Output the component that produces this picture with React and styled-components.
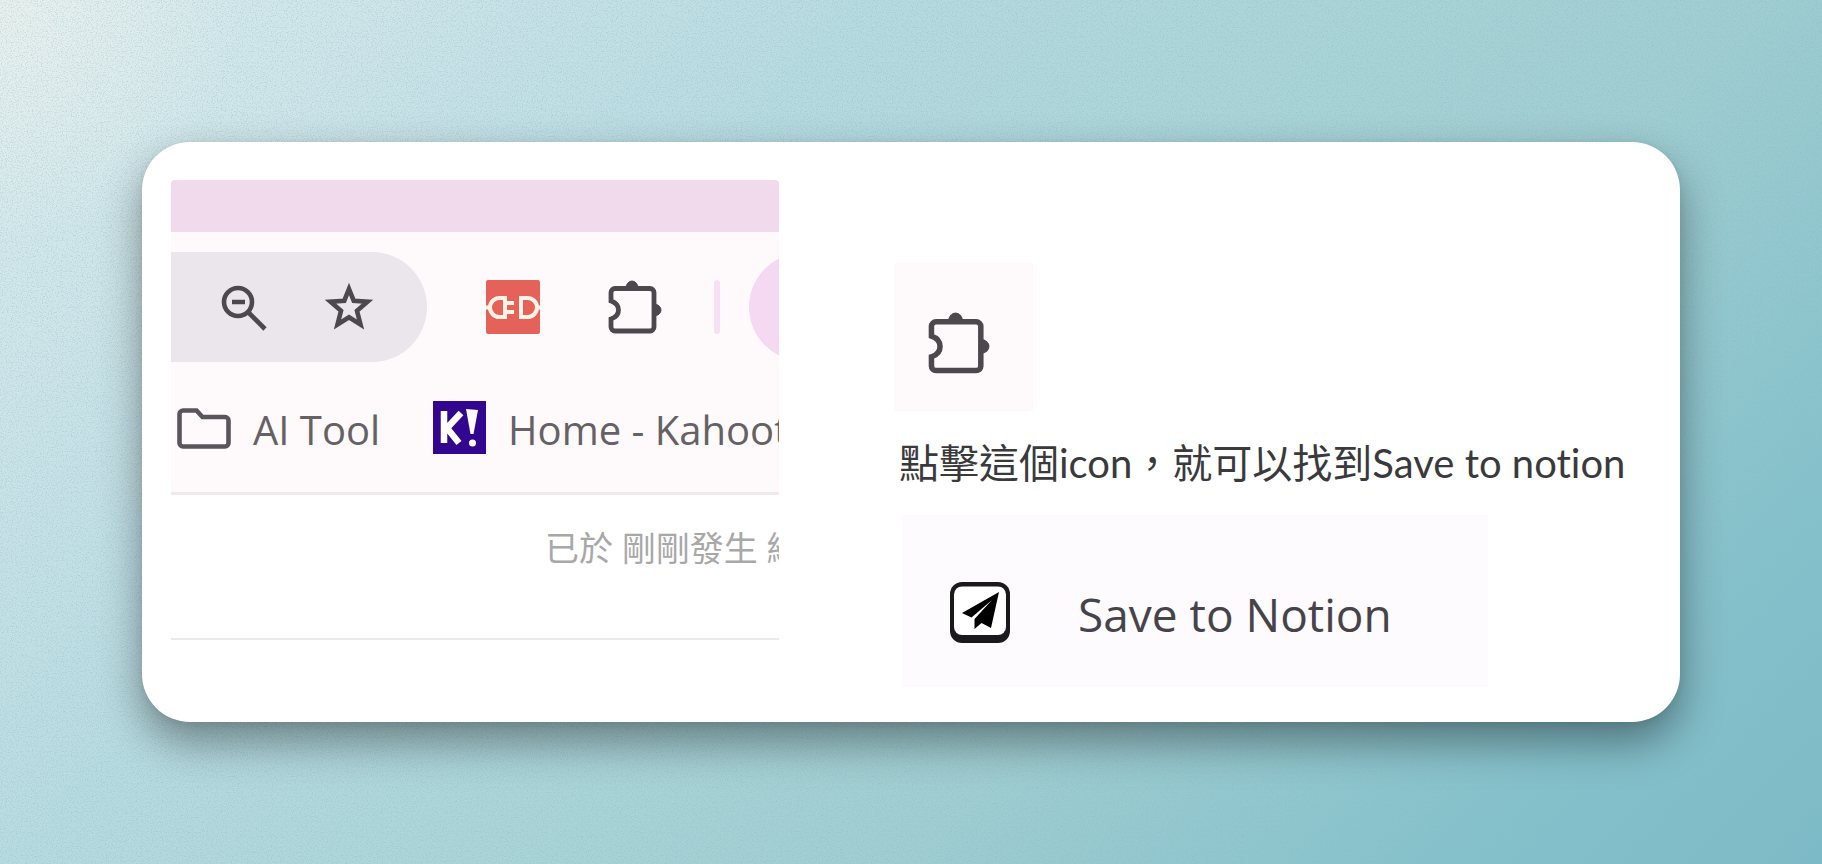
import React, { useId } from "react";
import styled, { createGlobalStyle } from "styled-components";

const GlobalStyle = createGlobalStyle`
  * {
    box-sizing: border-box;
  }
  body {
    margin: 0;
    font-family: "Open Sans", "Noto Sans CJK TC", sans-serif;
  }
`;

const Page = styled.main`
  position: relative;
  display: flex;
  min-height: 100vh;
  padding: 142px;
  background:
    radial-gradient(circle at 0 0, rgba(240, 242, 238, 0.7), rgba(240, 242, 238, 0) 12%),
    linear-gradient(135deg, #dbecee 0%, #cfe5e9 14%, #b8dbe1 32%, #aad4d8 50%, #9fcdd1 66%, #85c1cb 86%, #7cbac7 100%);
`;

const Grain = styled.svg`
  position: absolute;
  inset: 0;
  width: 100%;
  height: 100%;
  opacity: 0.3;
`;

const Card = styled.section`
  position: relative;
  flex: 1;
  display: flex;
  gap: 115px;
  padding: 38px 29px 32px;
  background: #fff;
  border-radius: 48px;
  box-shadow: 0 20px 44px rgba(0, 0, 0, 0.4), 0 2px 8px rgba(0, 0, 0, 0.06);
`;

const Browser = styled.div`
  flex: 0 1 608px;
  min-width: 0;
  overflow: hidden;
`;

const TabStrip = styled.div`
  height: 52px;
  background: #f0daec;
  border-radius: 4px 4px 0 0;
`;

const Chrome = styled.div`
  height: 263px;
  padding-top: 20px;
  background: #fefafc;
  border-bottom: 3px solid #f3e6ec;
`;

const Toolbar = styled.div`
  display: flex;
  align-items: center;
  height: 110px;
`;

const AddressEnd = styled.div`
  display: flex;
  align-items: center;
  flex: none;
  gap: 56px;
  width: 256px;
  height: 110px;
  padding-left: 49px;
  background: #ebe5ec;
  border-radius: 0 55px 55px 0;
`;

const IconButton = styled.button`
  display: flex;
  flex: none;
  margin: 0;
  padding: 0;
  border: 0;
  background: none;
  cursor: pointer;
`;

const Extensions = styled.div`
  display: flex;
  flex: none;
  align-items: center;
  gap: 68px;
  padding: 0 52px 0 59px;
`;

const Divider = styled.span`
  flex: none;
  width: 6px;
  height: 54px;
  border-radius: 3px;
  background: #f6e1f4;
`;

const Avatar = styled.button`
  flex: none;
  width: 108px;
  height: 108px;
  margin-left: 29px;
  padding: 0;
  border: 0;
  border-radius: 50%;
  background: #f5d8f1;
`;

const Bookmarks = styled.nav`
  display: flex;
  align-items: center;
  gap: 53px;
  height: 131px;
  padding-left: 6px;
`;

const Bookmark = styled.a`
  display: flex;
  flex: none;
  align-items: center;
  gap: 22px;
  font-size: 40px;
  line-height: 56px;
  color: #656165;
  text-decoration: none;
  white-space: nowrap;
`;

const Label = styled.span`
  padding-top: 4px;
`;

const Status = styled.p`
  margin: 0;
  height: 145px;
  padding: 28px 0 0 374px;
  border-bottom: 2px solid #ebebeb;
  font-size: 34px;
  line-height: 50px;
  color: #a8a8a8;
  white-space: nowrap;
  overflow: hidden;
`;

const Guide = styled.div`
  flex: 1;
  min-width: 0;
  padding-top: 83px;
`;

const Tile = styled.div`
  display: flex;
  align-items: center;
  justify-content: center;
  width: 139px;
  height: 148px;
  padding: 12px 10px 0 0;
  background: #fefafc;
`;

const Caption = styled.p`
  margin: 22px 0;
  padding-left: 5px;
  font-family: "Lato", "Noto Sans CJK TC", sans-serif;
  font-size: 40px;
  line-height: 60px;
  font-weight: 400;
  font-variant-ligatures: none;
  color: #3a3a3c;
  white-space: nowrap;
`;

const SaveItem = styled.button`
  display: flex;
  align-items: center;
  gap: 68px;
  width: 586px;
  height: 172px;
  margin: 0 0 0 8px;
  padding: 22px 0 0 48px;
  border: 0;
  background: #fdfbfe;
  font-family: inherit;
  font-size: 46px;
  line-height: 60px;
  color: #464449;
  text-align: left;
`;

const GrainLayer = () => {
  const id = useId();
  return (
    <Grain aria-hidden="true">
      <filter id={id} x="0" y="0" width="100%" height="100%">
        <feTurbulence type="fractalNoise" baseFrequency="0.8" numOctaves="3" />
        <feColorMatrix values="0 0 0 0 0.25  0 0 0 0 0.48  0 0 0 0 0.56  4 0 0 0 -1.9" />
      </filter>
      <rect width="100%" height="100%" filter={`url(#${id})`} />
    </Grain>
  );
};

const ZoomOutIcon = () => (
  <svg width="48" height="48" viewBox="0 0 48 48" fill="none" stroke="#4d484e" strokeWidth="4.6">
    <circle cx="18" cy="19" r="14" />
    <path d="M12 19h13M28 29l17 17" />
  </svg>
);

const StarIcon = () => (
  <svg width="50" height="50" viewBox="0 0 50 50" fill="none" stroke="#4d484e" strokeWidth="4.6">
    <path d="M25 7l4.700 11.700 13.800 1L33 28.700l3.500 13.800L25 35.200 13.500 42.500 17 28.700 6.500 19.700l13.800-1z" />
  </svg>
);

const PlugIcon = () => (
  <svg width="54" height="54" viewBox="0 0 54 54" fill="none" stroke="#fff3e6" strokeWidth="4">
    <rect width="54" height="54" rx="2" fill="#e4625a" stroke="none" />
    <path d="M19 18h-5.500a9.500 9.500 0 0 0 0 19H19z" />
    <path d="M0 27.500h4M19 23h9M19 32h9M50 27.500h4" />
    <path d="M35 18h6.500a9.500 9.500 0 0 1 0 19H35z" />
  </svg>
);

const PuzzleIcon = ({ size }) => (
  <svg width={size} height={size} viewBox="0 0 54 54" fill="none">
    <path
      d="M7 8.500h35a4 4 0 0 1 4 4V47a4 4 0 0 1-4 4H7a4 4 0 0 1-4-4v-8q7.500-2.500 7.500-9T3 21v-8.500a4 4 0 0 1 4-4z"
      stroke="#4d484e"
      strokeWidth="4.800"
    />
    <path d="M18 8a6 7 0 0 1 12 0zM46 24a7 6 0 0 1 0 12z" fill="#4d484e" stroke="#4d484e" />
  </svg>
);

const FolderIcon = () => (
  <svg width="54" height="42" viewBox="0 0 54 42" fill="none">
    <path
      d="M6 3.500h13.500l6 6.500H48a3.500 3.500 0 0 1 3.500 3.500v22.500A3.500 3.500 0 0 1 48 39.500H6A3.500 3.500 0 0 1 2.500 36V7A3.500 3.500 0 0 1 6 3.500z"
      stroke="#5a555a"
      strokeWidth="4.600"
    />
  </svg>
);

const KahootIcon = () => (
  <svg width="53" height="53" viewBox="0 0 53 53">
    <rect width="53" height="53" fill="#32068f" />
    <path d="M11 10v32M28 12L14 27l12 15" fill="none" stroke="#fff" strokeWidth="6.500" />
    <path d="M33 8l12 1-4.500 24h-3z" fill="#fff" />
    <circle cx="39.500" cy="42" r="3.500" fill="#fff" />
  </svg>
);

const SendIcon = () => (
  <svg width="60" height="61" viewBox="0 0 60 61">
    <rect width="60" height="61" rx="12" fill="#1a1a1d" />
    <rect x="4" y="4.500" width="52" height="48.500" rx="8" fill="#fff" />
    <path d="M49 10L12 31l9.500 4.500L42 18 24.500 37v10l7-6 9.500 5z" fill="#000" />
  </svg>
);

const App = () => {
  return (
    <>
      <GlobalStyle />
      <Page lang="zh-Hant">
        <GrainLayer />
        <Card>
          <Browser>
            <TabStrip />
            <Chrome>
              <Toolbar>
                <AddressEnd>
                  <IconButton aria-label="Zoom out">
                    <ZoomOutIcon />
                  </IconButton>
                  <IconButton aria-label="Bookmark">
                    <StarIcon />
                  </IconButton>
                </AddressEnd>
                <Extensions>
                  <IconButton aria-label="Plug">
                    <PlugIcon />
                  </IconButton>
                  <IconButton aria-label="Extensions">
                    <PuzzleIcon size={54} />
                  </IconButton>
                </Extensions>
                <Divider />
                <Avatar aria-label="Profile" />
              </Toolbar>
              <Bookmarks>
                <Bookmark href="#ai-tool">
                  <FolderIcon />
                  <Label>AI Tool</Label>
                </Bookmark>
                <Bookmark href="#kahoot">
                  <KahootIcon />
                  <Label>Home - Kahoot</Label>
                </Bookmark>
              </Bookmarks>
            </Chrome>
            <Status>已於 剛剛發生 編</Status>
          </Browser>
          <Guide>
            <Tile>
              <PuzzleIcon size={62} />
            </Tile>
            <Caption>點擊這個icon，就可以找到Save to notion</Caption>
            <SaveItem>
              <SendIcon />
              <Label>Save to Notion</Label>
            </SaveItem>
          </Guide>
        </Card>
      </Page>
    </>
  );
};

export default App;
